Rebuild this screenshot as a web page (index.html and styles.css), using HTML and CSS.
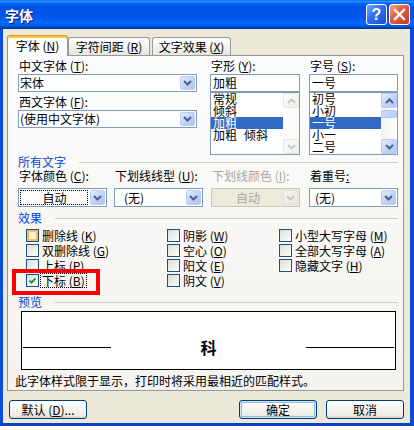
FILE: index.html
```html
<!DOCTYPE html>
<html lang="zh-CN">
<head>
<meta charset="utf-8">
<title>字体</title>
<link rel="stylesheet" href="styles.css">
</head>
<body>
<div class="window">
  <div class="titlebar">
    <span class="title">字体</span>
    <div class="tb-buttons">
      <span class="tb-btn tb-help">?</span>
      <span class="tb-btn tb-close"><svg viewBox="0 0 19 19" width="19" height="19"><path d="M5 5 L14 14 M14 5 L5 14" stroke="#fff" stroke-width="2.4" stroke-linecap="square"/></svg></span>
    </div>
  </div>
  <div class="frame">
    <div class="tabs">
      <div class="tab tab-1 active">字体 (<u>N</u>)</div>
      <div class="tab tab-2">字符间距 (<u>R</u>)</div>
      <div class="tab tab-3">文字效果 (<u>X</u>)</div>
    </div>
    <div class="panel">
      <div class="top">
        <div class="col-font">
          <div class="lbl">中文字体 (<u>T</u>):</div>
          <div class="combo"><span class="val">宋体</span><span class="dd"><svg width="9" height="6" viewBox="0 0 9 6"><path d="M1 1 L4.5 4.5 L8 1" fill="none" stroke="currentColor" stroke-width="2"/></svg></span></div>
          <div class="lbl lbl2">西文字体 (<u>F</u>):</div>
          <div class="combo"><span class="val">(使用中文字体)</span><span class="dd"><svg width="9" height="6" viewBox="0 0 9 6"><path d="M1 1 L4.5 4.5 L8 1" fill="none" stroke="currentColor" stroke-width="2"/></svg></span></div>
        </div>
        <div class="col-style">
          <div class="lbl">字形 (<u>Y</u>):</div>
          <div class="textbox">加粗</div>
          <div class="listbox">
            <div class="items">
              <div class="item">常规</div>
              <div class="item">倾斜</div>
              <div class="item sel">加粗</div>
              <div class="item">加粗<span class="gap"></span>倾斜</div>
            </div>
            <div class="vscroll disabled">
              <span class="sb-btn"><svg width="9" height="6" viewBox="0 0 9 6"><path d="M1 5 L4.5 1.5 L8 5" fill="none" stroke="currentColor" stroke-width="2"/></svg></span>
              <span class="sb-track"></span>
              <span class="sb-btn"><svg width="9" height="6" viewBox="0 0 9 6"><path d="M1 1 L4.5 4.5 L8 1" fill="none" stroke="currentColor" stroke-width="2"/></svg></span>
            </div>
          </div>
        </div>
        <div class="col-size">
          <div class="lbl">字号 (<u>S</u>):</div>
          <div class="textbox">一号</div>
          <div class="listbox">
            <div class="items">
              <div class="item">初号</div>
              <div class="item">小初</div>
              <div class="item sel">一号</div>
              <div class="item">小一</div>
              <div class="item">二号</div>
            </div>
            <div class="vscroll">
              <span class="sb-btn"><svg width="9" height="6" viewBox="0 0 9 6"><path d="M1 5 L4.5 1.5 L8 5" fill="none" stroke="currentColor" stroke-width="2"/></svg></span>
              <span class="sb-track"><span class="sb-thumb"></span></span>
              <span class="sb-btn"><svg width="9" height="6" viewBox="0 0 9 6"><path d="M1 1 L4.5 4.5 L8 1" fill="none" stroke="currentColor" stroke-width="2"/></svg></span>
            </div>
          </div>
        </div>
      </div>

      <div class="group">所有文字</div>
      <div class="fields">
        <div class="field f1">
          <div class="lbl flbl">字体颜色 (<u>C</u>):</div>
          <div class="combo tall"><span class="val focus">自动</span><span class="dd"><svg width="9" height="6" viewBox="0 0 9 6"><path d="M1 1 L4.5 4.5 L8 1" fill="none" stroke="currentColor" stroke-width="2"/></svg></span></div>
        </div>
        <div class="field f2">
          <div class="lbl flbl">下划线线型 (<u>U</u>):</div>
          <div class="combo tall"><span class="val pad9">(无)</span><span class="dd"><svg width="9" height="6" viewBox="0 0 9 6"><path d="M1 1 L4.5 4.5 L8 1" fill="none" stroke="currentColor" stroke-width="2"/></svg></span></div>
        </div>
        <div class="field f3">
          <div class="lbl flbl dis">下划线颜色 (<u>I</u>):</div>
          <div class="combo tall disabled"><span class="val center">自动</span><span class="dd"><svg width="9" height="6" viewBox="0 0 9 6"><path d="M1 1 L4.5 4.5 L8 1" fill="none" stroke="currentColor" stroke-width="2"/></svg></span></div>
        </div>
        <div class="field f4">
          <div class="lbl flbl">着重号<u>:</u></div>
          <div class="combo tall"><span class="val pad5">(无)</span><span class="dd"><svg width="9" height="6" viewBox="0 0 9 6"><path d="M1 1 L4.5 4.5 L8 1" fill="none" stroke="currentColor" stroke-width="2"/></svg></span></div>
        </div>
      </div>

      <div class="group g-effects">效果</div>
      <div class="effects">
        <div class="ecol ecol1">
          <div class="chk"><span class="box hover"></span><span class="ctext">删除线 (<u>K</u>)</span></div>
          <div class="chk"><span class="box"></span><span class="ctext">双删除线 (<u>G</u>)</span></div>
          <div class="chk"><span class="box"></span><span class="ctext">上标 (<u>P</u>)</span></div>
          <div class="chk"><span class="box"><svg width="11" height="11" viewBox="0 0 11 11"><path d="M2.5 5.5 L4.5 7.5 L8.5 3.5" fill="none" stroke="#21A121" stroke-width="2"/></svg></span><span class="ctext focus">下标 (<u>B</u>)</span></div>
        </div>
        <div class="ecol ecol2">
          <div class="chk"><span class="box"></span><span class="ctext">阴影 (<u>W</u>)</span></div>
          <div class="chk"><span class="box"></span><span class="ctext">空心 (<u>O</u>)</span></div>
          <div class="chk"><span class="box"></span><span class="ctext">阳文 (<u>E</u>)</span></div>
          <div class="chk"><span class="box"></span><span class="ctext">阴文 (<u>V</u>)</span></div>
        </div>
        <div class="ecol ecol3">
          <div class="chk"><span class="box"></span><span class="ctext">小型大写字母 (<u>M</u>)</span></div>
          <div class="chk"><span class="box"></span><span class="ctext">全部大写字母 (<u>A</u>)</span></div>
          <div class="chk"><span class="box"></span><span class="ctext">隐藏文字 (<u>H</u>)</span></div>
        </div>
      </div>

      <div class="group g-preview">预览</div>
      <div class="preview">
        <span class="pline pline-l"></span>
        <span class="pchar">科</span>
        <span class="pline pline-r"></span>
      </div>
      <div class="note">此字体样式限于显示，打印时将采用最相近的匹配样式。</div>
    </div>
    <div class="buttons">
      <div class="btn">默认 (<u>D</u>)...</div>
      <div class="btn btn-ok">确定</div>
      <div class="btn btn-cancel">取消</div>
    </div>
  </div>
  <div class="annot"></div>
</div>
</body>
</html>
```

FILE: styles.css
```css
* { box-sizing: border-box; }
html, body { margin: 0; padding: 0; }
body {
  width: 414px;
  height: 430px;
  overflow: hidden;
  background: #fff;
  color: #000;
  font: 12px/14px "Noto Sans CJK SC", "Liberation Sans", sans-serif;
}
u { text-decoration: underline; text-underline-offset: 1px; }

.window {
  position: relative;
  width: 414px;
  height: 426px;
  display: flex;
  flex-direction: column;
}

/* title bar */
.titlebar {
  flex: none;
  height: 29px;
  display: flex;
  align-items: center;
  background: linear-gradient(to bottom, #0058EE 0%, #3593FF 4%, #288EFF 6%, #127DFF 8%, #036FFC 10%, #0262EE 14%, #0057E5 20%, #0054E3 24%, #0055EB 56%, #005BF5 66%, #026AFE 76%, #0062EF 86%, #0052D6 92%, #0040AB 96%, #003092 100%);
}
.title {
  padding-left: 5px;
  color: #fff;
  font-weight: bold;
  font-size: 14px;
  line-height: 16px;
  text-shadow: 1px 1px 0 #0A1883;
}
.tb-buttons {
  margin-left: auto;
  margin-right: 4px;
  display: flex;
  gap: 2px;
}
.tb-btn {
  width: 21px;
  height: 21px;
  border: 1px solid #fff;
  border-radius: 3px;
  display: flex;
  align-items: center;
  justify-content: center;
}
.tb-help {
  background: linear-gradient(135deg, #6FA8FF 0%, #2E6EEC 45%, #1A4ED0 100%);
  color: #fff;
  font: bold 16px/1 "Liberation Sans", sans-serif;
}
.tb-close {
  background: linear-gradient(135deg, #F3A78F 0%, #E3643F 40%, #C4391A 100%);
}
.tb-close svg { display: block; }

/* frame */
.frame {
  flex: 1;
  background: #ECE9D8;
  border-left: 3px solid #0B4CDB;
  border-right: 4px solid #0B4CDB;
  border-bottom: 3px solid #0A3FC8;
  padding-top: 6px;
}

/* tabs */
.tabs {
  display: flex;
  align-items: flex-end;
  height: 20px;
  margin-left: 4px;
}
.tab {
  height: 18px;
  display: flex;
  align-items: center;
  justify-content: center;
  white-space: nowrap;
  border: 1px solid #919B9C;
  border-bottom: none;
  border-radius: 3px 3px 0 0;
  background: linear-gradient(#FFFFFF, #F3F3EF 50%, #E6E5DD);
}
.tab-1 { width: 61px; }
.tab-2 { width: 82px; }
.tab-3 { width: 79px; margin-left: 2px; }
.tab.active {
  height: 21px;
  margin-bottom: -1px;
  position: relative;
  z-index: 1;
  background: #FCFCFE;
  border-top: 1px solid #E68B2C;
  box-shadow: inset 0 2px 0 #FFC73C;
}

/* panel */
.panel {
  margin-left: 4px;
  width: 397px;
  height: 336px;
  border: 1px solid #919B9C;
  background: linear-gradient(#FCFCFE, #F4F3EE);
  display: flex;
  flex-direction: column;
}
.top {
  flex: none;
  display: flex;
  height: 99px;
  padding: 2px 0 0 10px;
}
.col-font { width: 179px; margin-right: 13px; }
.col-style { width: 90px; }
.col-size { width: 89px; margin-left: 9px; }

.lbl {
  height: 16px;
  line-height: 16px;
  white-space: nowrap;
  padding-left: 1px;
}
.lbl2 { margin-top: 2px; }
.dis { color: #ACA899; }

/* combo */
.combo {
  height: 18px;
  border: 1px solid #7F9DB9;
  background: #fff;
  display: flex;
}
.combo .val {
  flex: 1;
  padding-left: 1px;
  line-height: 16px;
  white-space: nowrap;
  overflow: hidden;
}
.dd {
  flex: none;
  width: 15px;
  margin: 1px 1px 1px 0;
  border: 1px solid #BACCF6;
  border-radius: 2px;
  background: linear-gradient(135deg, #E6EDFD 0%, #C3D4F9 50%, #ADC3F4 100%);
  color: #4D6185;
  display: flex;
  align-items: center;
  justify-content: center;
}
.dd svg { display: block; }
.combo.tall { height: 19px; }
.combo.tall .val { line-height: 17px; }
.combo .val.focus {
  margin: 1px 2px 1px 1px;
  border: 1px dotted #000;
  line-height: 13px;
  text-align: center;
}
.combo .val.center { text-align: center; }
.combo .val.pad9 { padding-left: 9px; }
.combo .val.pad5 { padding-left: 5px; }
.combo.disabled {
  border-color: #C9C7BA;
  background: #EBEADB;
  color: #ACA899;
}
.combo.disabled .dd {
  border-color: #E3E1D6;
  background: linear-gradient(135deg, #F7F6F2, #E8E6DC);
  color: #C9C7BA;
}

/* textbox + listbox */
.textbox {
  height: 18px;
  border: 1px solid #7F9DB9;
  background: #fff;
  padding-left: 2px;
  line-height: 16px;
  white-space: nowrap;
}
.listbox {
  height: 63px;
  border: 1px solid #7F9DB9;
  background: #fff;
  display: flex;
}
.items { flex: 1; }
.item {
  height: 12px;
  line-height: 12px;
  padding-left: 2px;
  white-space: nowrap;
}
.item.sel { background: #316AC5; color: #fff; }
.gap { display: inline-block; width: 7px; }

.vscroll {
  flex: none;
  width: 16px;
  display: flex;
  flex-direction: column;
  background: linear-gradient(to right, #F3F1EC, #FEFEFB);
}
.sb-btn {
  flex: none;
  height: 15px;
  border: 1px solid #BCCDF4;
  border-radius: 2px;
  background: linear-gradient(135deg, #E6EDFD 0%, #C0D2F9 55%, #AFC5F5 100%);
  color: #4D6185;
  display: flex;
  align-items: center;
  justify-content: center;
}
.sb-btn svg { display: block; }
.sb-track { flex: 1; display: flex; flex-direction: column; }
.sb-thumb {
  height: 8px;
  margin-top: 2px;
  border: 1px solid #B4C8F6;
  border-radius: 2px;
  background: linear-gradient(to right, #CAD9FC, #B9CDF7);
}
.vscroll.disabled { background: #FCFCFA; }
.vscroll.disabled .sb-btn {
  border-color: #E8E6DD;
  background: linear-gradient(135deg, #FEFEFD, #EFEEE8);
  color: #CBCBC4;
}

/* group headings */
.group {
  flex: none;
  display: flex;
  align-items: center;
  height: 14px;
  padding-left: 10px;
  color: #0046D5;
  white-space: nowrap;
}
.group::after {
  content: "";
  flex: 1;
  height: 1px;
  background: #D0D0BF;
  margin-left: 13px;
  margin-right: 5px;
}
.g-effects { margin-top: 4px; }
.g-preview { margin-top: 7px; }

/* fields row */
.fields {
  flex: none;
  display: flex;
  padding-left: 10px;
}
.field { width: 89px; }
.f2 { margin-left: 7px; }
.f3 { margin-left: 8px; }
.f4 { margin-left: 9px; }
.flbl { height: 19px; line-height: 14px; }

/* effects */
.effects {
  flex: none;
  display: flex;
  margin-top: 3px;
  padding-left: 18px;
  height: 60px;
}
.ecol1 { width: 141px; }
.ecol2 { width: 112px; }
.chk {
  height: 15px;
  display: flex;
  align-items: center;
  white-space: nowrap;
}
.box {
  flex: none;
  width: 13px;
  height: 13px;
  border: 1px solid #1C5180;
  background: linear-gradient(135deg, #DCDCD7, #FFFFFF);
  display: flex;
  align-items: center;
  justify-content: center;
}
.box svg { display: block; }
.box.hover { box-shadow: inset 0 0 0 2px #F8BE55; background: linear-gradient(135deg, #F7E3B5, #FFFFFF); }
.ctext { margin-left: 3px; line-height: 13px; }
.ctext.focus {
  margin-left: 1px;
  padding: 0 1px;
  border: 1px dotted #000;
}

/* preview */
.preview {
  flex: none;
  margin: 2px 0 0 13px;
  width: 375px;
  height: 59px;
  border: 1px solid #000;
  background: #fff;
  display: flex;
  align-items: center;
  padding-top: 13px;
}
.pline {
  width: 88px;
  height: 1px;
  background: #000;
}
.pline-l { margin-left: 1px; }
.pline-r { margin-right: 1px; margin-left: auto; }
.pchar {
  margin-left: auto;
  font-weight: bold;
  font-size: 16px;
  line-height: 16px;
}

.note {
  flex: none;
  margin-top: 4px;
  padding-left: 7px;
  height: 14px;
  line-height: 14px;
  white-space: nowrap;
}

/* buttons */
.buttons {
  display: flex;
  margin-top: 9px;
  padding: 0 6px;
}
.btn {
  width: 78px;
  height: 19px;
  border: 1px solid #003C74;
  border-radius: 3px;
  background: linear-gradient(#FFFFFF 0%, #F5F5F1 45%, #ECEBE6 85%, #D6D0C5 100%);
  display: flex;
  align-items: center;
  justify-content: center;
  line-height: 14px;
  white-space: nowrap;
}
.btn-ok {
  margin-left: auto;
  box-shadow: inset 0 0 0 1px #CEE7FF, inset 0 0 0 2px #98B8EA;
}
.btn-cancel { margin-left: 9px; }

/* red annotation rectangle over the dialog */
.annot {
  position: absolute;
  left: 12px;
  top: 269px;
  width: 88px;
  height: 26px;
  border: 4px solid #FF0000;
}
```
